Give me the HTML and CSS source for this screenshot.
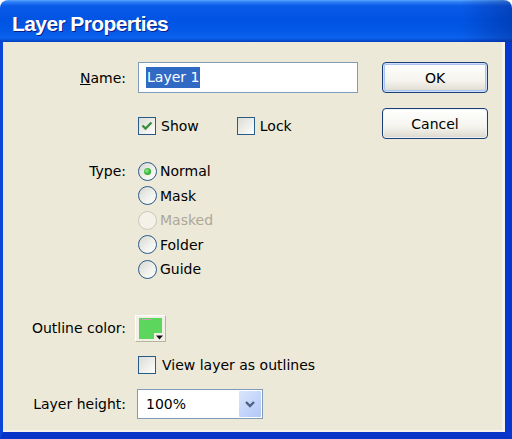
FILE: index.html
```html
<!DOCTYPE html>
<html>
<head>
<meta charset="utf-8">
<link rel="stylesheet" href="styles.css">
</head>
<body>
<div class="window">
  <div class="titlebar"><span class="title">Layer Properties</span></div>
  <div class="body">
    <div class="form">
      <div class="row row-name">
        <span class="lbl"><u>N</u>ame:</span>
        <div class="textbox"><span class="sel">Layer 1</span></div>
      </div>
      <div class="row row-checks">
        <span class="lbl"></span>
        <span class="check checked"><span class="box"><svg viewBox="0 0 18 18" width="18" height="18"><path d="M4.5 8.5 L7.5 11.5 L13.5 5.5" fill="none" stroke="#3a8f3a" stroke-width="2.3"/></svg></span><span class="ctext">Show</span></span>
        <span class="check lock"><span class="box"></span><span class="ctext">Lock</span></span>
      </div>
      <div class="row row-type">
        <span class="lbl lbl-top">Type:</span>
        <div class="radios">
          <div class="radio on"><span class="dot"></span><span class="rtext">Normal</span></div>
          <div class="radio"><span class="dot"></span><span class="rtext">Mask</span></div>
          <div class="radio disabled"><span class="dot"></span><span class="rtext">Masked</span></div>
          <div class="radio"><span class="dot"></span><span class="rtext">Folder</span></div>
          <div class="radio"><span class="dot"></span><span class="rtext">Guide</span></div>
        </div>
      </div>
      <div class="row row-outline">
        <span class="lbl">Outline color:</span>
        <span class="swatch"><svg viewBox="0 0 31 27" width="31" height="27"><path d="M4 3H27V18H19V24H4Z" fill="#5cd65c"/><path d="M7 4.5H16" stroke="#c9a0b8" stroke-width="1"/><path d="M21 20.5H28L24.5 24.5Z" fill="#111"/></svg></span>
      </div>
      <div class="row row-view">
        <span class="lbl"></span>
        <span class="check"><span class="box"></span><span class="ctext">View layer as outlines</span></span>
      </div>
      <div class="row row-height">
        <span class="lbl">Layer height:</span>
        <div class="select"><span class="stext">100%</span><span class="sarrow"><svg viewBox="0 0 22 27" width="22" height="27"><path d="M7 11 L11 15 L15 11" fill="none" stroke="#4d6185" stroke-width="2.4"/></svg></span></div>
      </div>
    </div>
    <div class="buttons">
      <div class="btn default">OK</div>
      <div class="btn">Cancel</div>
    </div>
  </div>
</div>
</body>
</html>
```
FILE: styles.css
```css
html, body {
  margin: 0;
  padding: 0;
  background: #ffffff;
}
.window {
  width: 512px;
  height: 439px;
  display: flex;
  flex-direction: column;
  font-family: "DejaVu Sans", sans-serif;
  font-size: 14px;
  color: #000;
}
.titlebar {
  height: 36px;
  padding: 6px 0 0 12px;
  border-radius: 8px 8px 0 0;
  background:
    linear-gradient(to right, rgba(0,0,0,0) 90%, rgba(0,10,80,0.28) 100%),
    linear-gradient(to bottom, #5aa6ff 0, #2d7ef4 2px, #0a5ae8 6px, #0054e3 20px, #0358e6 30px, #0b62ee 38px, #0040c0 42px);
}
.title {
  display: block;
  font-family: "Liberation Sans", Arial, sans-serif;
  font-weight: bold;
  font-size: 21px;
  letter-spacing: -0.6px;
  line-height: 36px;
  color: #ffffff;
  text-shadow: 1px 1px 0 #0a1e8c;
}
.body {
  flex: 1;
  display: flex;
  background: #ece9d8;
  border-left: 3px solid #0a46d8;
  border-right: 7px solid #0836d0;
  border-bottom: 7px solid #0834c8;
  box-shadow: inset -3px -2px 0 #f5f3ea;
}
.form {
  padding-top: 20px;
  display: flex;
  flex-direction: column;
}
.row {
  display: flex;
  align-items: center;
}
.lbl {
  width: 123px;
  margin-right: 11px;
  text-align: right;
  flex: none;
}
.lbl-top {
  align-self: flex-start;
  line-height: 24.5px;
}
.row-name { height: 31px; }
.textbox {
  margin-left: 1px;
  border: 1px solid #7f9db9;
  background: #ffffff;
  display: flex;
  align-items: center;
  padding-left: 7px;
  box-sizing: border-box;
  width: 220px;
  height: 31px;
}
.sel {
  background: #316ac5;
  color: #ffffff;
  line-height: 21px;
  padding: 0 1px;
}
.row-checks {
  margin-top: 23px;
  height: 19px;
}
.check {
  display: flex;
  align-items: center;
  margin-left: 1px;
}
.check.lock { margin-left: 38px; }
.box {
  width: 18px;
  height: 18px;
  box-sizing: border-box;
  border: 1px solid #2a5a88;
  background: linear-gradient(135deg, #dcdcd7 0%, #f0f0ec 60%, #ffffff 100%);
  flex: none;
  display: block;
}
.box svg { display: block; margin: -1px; }
.ctext { margin-left: 5px; }
.row-type {
  margin-top: 24px;
  align-items: flex-start;
}
.radios {
  display: flex;
  flex-direction: column;
}
.radio {
  height: 24.5px;
  display: flex;
  align-items: center;
  margin-left: 1px;
}
.dot {
  width: 19px;
  height: 19px;
  box-sizing: border-box;
  border-radius: 50%;
  border: 1px solid #2a5a88;
  background: linear-gradient(135deg, #d8d8d2 0%, #f0f0ec 55%, #ffffff 100%);
  flex: none;
  position: relative;
}
.radio.on .dot::after {
  content: "";
  position: absolute;
  left: 5px;
  top: 5px;
  width: 7px;
  height: 7px;
  border-radius: 50%;
  background: radial-gradient(circle at 40% 40%, #a6e8a6 0, #3fbf3f 45%, #1a9a1a 100%);
}
.radio.disabled .dot {
  border-color: #cac8bb;
  background: #f3f1e8;
}
.radio.disabled .rtext { color: #aca899; }
.rtext { margin-left: 3px; }
.row-outline {
  margin-top: 33px;
  height: 27px;
}
.swatch {
  width: 31px;
  height: 27px;
  margin-left: -2px;
  box-sizing: border-box;
  background: #f1efe6;
  border: 1px solid;
  border-color: #ffffff #b8b4a2 #b8b4a2 #ffffff;
  display: block;
}
.swatch svg { display: block; margin: -1px; }
.row-view {
  margin-top: 14px;
  height: 19px;
}
.row-view .ctext { margin-left: 6px; }
.row-height {
  margin-top: 14px;
  height: 30px;
}
.select {
  width: 126px;
  height: 30px;
  box-sizing: border-box;
  border: 1px solid #7f9db9;
  background: #ffffff;
  display: flex;
  align-items: center;
  justify-content: space-between;
  padding: 1px;
}
.stext { padding-left: 7px; }
.sarrow {
  width: 22px;
  height: 26px;
  background: linear-gradient(135deg, #dce6fb 0%, #c1d3fb 60%, #b4c8f6 100%);
  border-radius: 1px;
  display: block;
}
.sarrow svg { display: block; }
.buttons {
  margin-left: auto;
  margin-right: 17px;
  padding-top: 20px;
  display: flex;
  flex-direction: column;
  gap: 15px;
}
.btn {
  width: 106px;
  height: 31px;
  box-sizing: border-box;
  border: 1px solid #1a3f78;
  border-radius: 4px;
  background: linear-gradient(to bottom, #ffffff 0%, #f5f4ef 60%, #e4e0d6 90%, #d6d0c5 100%);
  box-shadow: inset 0 0 0 1px #eef3fb;
  display: flex;
  align-items: center;
  justify-content: center;
}
.btn.default {
  box-shadow: inset 0 0 0 1px #cee0fb, inset 0 0 0 2px #a8c4ef;
}
```
